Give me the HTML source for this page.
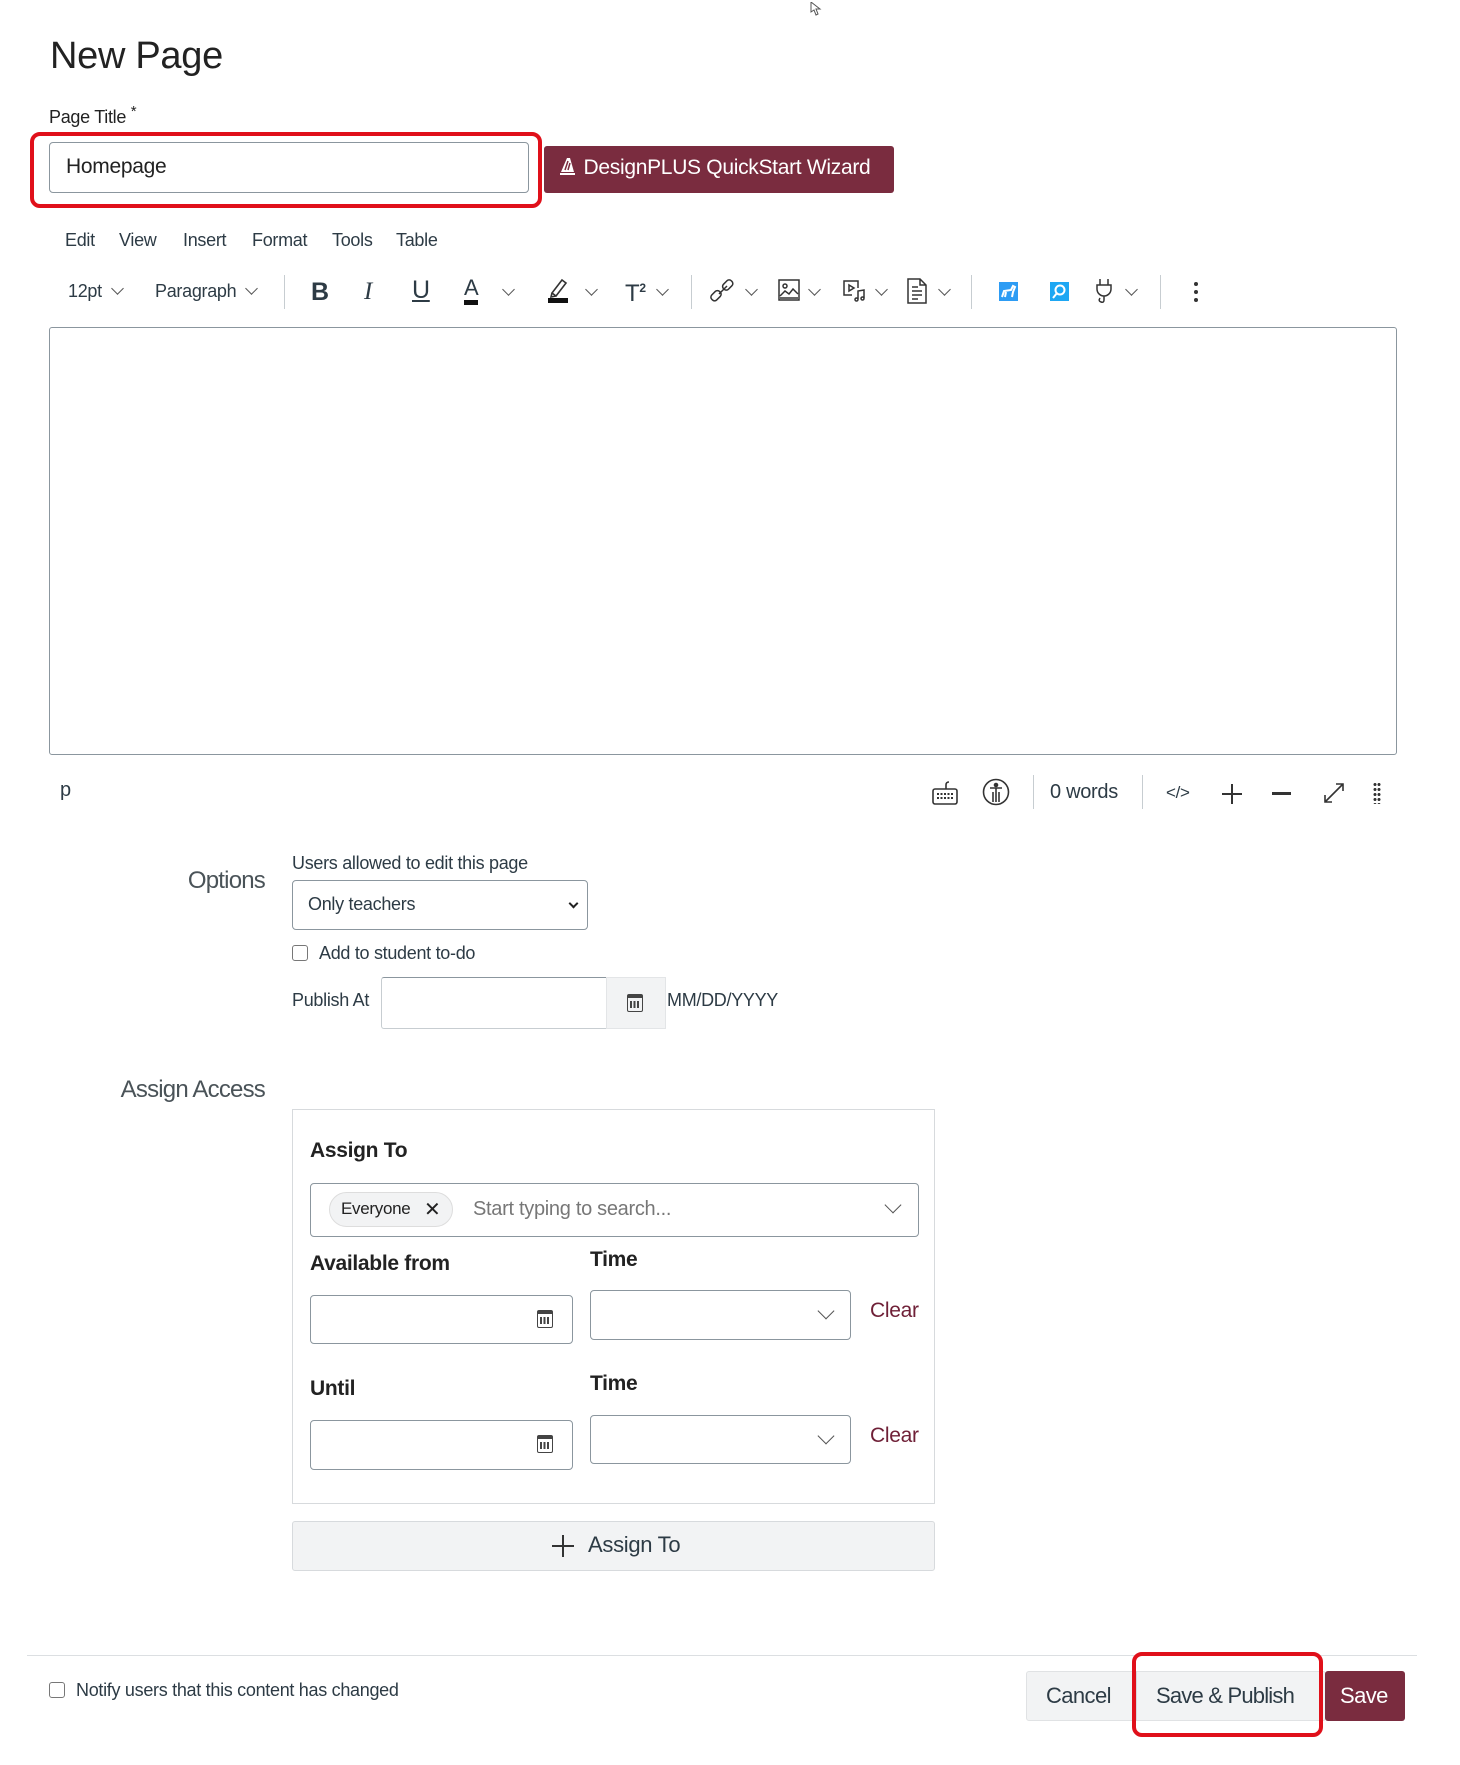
<!DOCTYPE html>
<html><head><meta charset="utf-8"><style>
*{box-sizing:border-box;margin:0;padding:0}
body{width:1460px;height:1763px;background:#fff;font-family:"Liberation Sans",sans-serif;color:#2d3b45;position:relative;overflow:hidden}
#w{position:absolute;left:0;top:2px;width:1460px;height:1763px;letter-spacing:-0.3px}
.a{position:absolute;white-space:nowrap}
.t{font-size:18px;color:#2d3b45}
.ch{display:inline-block;width:9px;height:9px;border-right:1.5px solid #555;border-bottom:1.5px solid #555;transform:rotate(45deg)}
.sep{position:absolute;width:1px;height:34px;background:#c7cdd1;top:273px}
.box{position:absolute;border:1px solid #8b969e;border-radius:4px;background:#fff}
.cal{position:absolute;width:16px;height:18px;border:1.5px solid #444;border-top-width:4px;border-radius:2px}
.cal:after{content:"";position:absolute;left:2px;top:3px;width:9px;height:7px;background:repeating-linear-gradient(90deg,#444 0 2px,transparent 2px 3.5px)}
</style></head><body><div id="w">
<div class="a" style="left:50px;top:33px;font-size:38px;color:#222">New Page</div>
<div class="a t" style="left:49px;top:101px;font-size:18px;color:#222">Page Title <sup>*</sup></div>
<div class="a" style="left:30px;top:130px;width:512px;height:76px;border:4px solid #e0101a;border-radius:10px"></div>
<div class="box" style="left:49px;top:140px;width:480px;height:51px"></div>
<div class="a" style="left:66px;top:153px;font-size:21px;color:#222">Homepage</div>
<div class="a" style="left:544px;top:144px;width:350px;height:47px;background:#7a2c3f;border-radius:3px;color:#fff;font-size:21px;padding:10px 0 0 14px">
<svg width="20" height="20" viewBox="0 0 20 20" style="vertical-align:-2px"><path d="M9 2 L3 16 H16 L12 2Z" fill="#fff"/><rect x="2" y="17" width="15" height="2" fill="#fff"/><path d="M10 5 L7 14 M12 7 L10 14" stroke="#7a2c3f" stroke-width="1.5"/></svg> DesignPLUS QuickStart Wizard</div>

<div class="a t" style="left:65px;top:228px">Edit</div>
<div class="a t" style="left:119px;top:228px">View</div>
<div class="a t" style="left:183px;top:228px">Insert</div>
<div class="a t" style="left:252px;top:228px">Format</div>
<div class="a t" style="left:332px;top:228px">Tools</div>
<div class="a t" style="left:396px;top:228px">Table</div>

<div class="a t" style="left:68px;top:279px">12pt <span class="ch" style="margin-left:6px;vertical-align:4px"></span></div>
<div class="a t" style="left:155px;top:279px">Paragraph <span class="ch" style="margin-left:6px;vertical-align:4px"></span></div>
<div class="sep" style="left:284px"></div>
<div class="a" style="left:311px;top:276px;font-size:25px;font-weight:bold;color:#2d3b45">B</div>
<div class="a" style="left:364px;top:276px;font-size:25px;font-style:italic;font-family:'Liberation Serif',serif">I</div>
<div class="a" style="left:412px;top:274px;font-size:25px;text-decoration:underline">U</div>
<div class="a" style="left:464px;top:274px;font-size:22px;border-bottom:5px solid #111;line-height:24px">A</div>
<span class="a ch" style="left:504px;top:283px"></span>
<svg class="a" style="left:546px;top:273px" width="24" height="28" viewBox="0 0 24 28"><path d="M6 18 L16 5 L20 8 L10 21 Z M6 18 L5 22 L10 21" fill="none" stroke="#333" stroke-width="1.6"/><rect x="2" y="23" width="20" height="5" fill="#111"/></svg>
<span class="a ch" style="left:587px;top:283px"></span>
<div class="a" style="left:625px;top:278px;font-size:24px">T<sup style="font-size:12px;font-weight:bold">2</sup></div>
<span class="a ch" style="left:658px;top:283px"></span>
<div class="sep" style="left:691px"></div>
<svg class="a" style="left:710px;top:275px" width="26" height="26" viewBox="0 0 26 26" fill="none" stroke="#333" stroke-width="1.5"><rect x="3" y="13" width="7" height="11" rx="3" transform="rotate(45 6 18)"/><rect x="14" y="2" width="7" height="11" rx="3" transform="rotate(45 17 8)"/><path d="M9 17 L17 9"/></svg>
<span class="a ch" style="left:747px;top:283px"></span>
<svg class="a" style="left:778px;top:277px" width="22" height="22" viewBox="0 0 22 22" fill="none" stroke="#333" stroke-width="1.5"><rect x="1" y="1" width="20" height="20"/><circle cx="7" cy="7" r="2"/><path d="M2 17 L7 12 L11 15 L15 10 L20 15 M2 19 H20"/></svg>
<span class="a ch" style="left:810px;top:283px"></span>
<svg class="a" style="left:842px;top:277px" width="24" height="24" viewBox="0 0 24 24" fill="none" stroke="#333" stroke-width="1.5"><path d="M16 9 V2 H2 V16 H10"/><path d="M7 6 L12 9 L7 12Z"/><path d="M16 20 V12 L22 11 V19"/><circle cx="14.5" cy="20.5" r="1.5"/><circle cx="20.5" cy="19.5" r="1.5"/></svg>
<span class="a ch" style="left:877px;top:283px"></span>
<svg class="a" style="left:907px;top:276px" width="20" height="26" viewBox="0 0 20 26" fill="none" stroke="#333" stroke-width="1.5"><path d="M1 1 H13 L19 7 V25 H1Z M13 1 V7 H19 M5 9 H11 M5 13 H15 M5 17 H15 M5 21 H11"/></svg>
<span class="a ch" style="left:940px;top:283px"></span>
<div class="sep" style="left:971px"></div>
<div class="a" style="left:999px;top:280px;width:19px;height:19px;background:#2d9cf4"><svg width="19" height="19" viewBox="0 0 19 19"><path d="M3 15 L5 9 L12 8 L14 4 L16 5 L14 10 L13 15 M7 10 L6 15" stroke="#fff" stroke-width="2" fill="none"/></svg></div>
<div class="a" style="left:1050px;top:280px;width:19px;height:19px;background:#1ea7f3"><svg width="19" height="19" viewBox="0 0 19 19"><circle cx="10" cy="8" r="4.5" stroke="#fff" stroke-width="2" fill="none"/><path d="M7 11 L3 16" stroke="#fff" stroke-width="2"/></svg></div>
<svg class="a" style="left:1094px;top:276px" width="20" height="26" viewBox="0 0 20 26" fill="none" stroke="#333" stroke-width="1.5"><path d="M6 1 V7 M14 1 V7 M3 7 H17 V11 A7 7 0 0 1 3 11Z M10 18 V22 Q10 25 7 24 Q4 23 6 20"/></svg>
<span class="a ch" style="left:1127px;top:283px"></span>
<div class="sep" style="left:1160px"></div>
<div class="a" style="left:1194px;top:280px;width:4px;line-height:0"><div style="width:4px;height:4px;border-radius:2px;background:#333;margin-bottom:4px"></div><div style="width:4px;height:4px;border-radius:2px;background:#333;margin-bottom:4px"></div><div style="width:4px;height:4px;border-radius:2px;background:#333"></div></div>

<div class="a" style="left:49px;top:325px;width:1348px;height:428px;border:1px solid #8b969e;border-radius:3px"></div>

<div class="a t" style="left:60px;top:777px;font-size:20px">p</div>
<svg class="a" style="left:932px;top:777px" width="26" height="26" viewBox="0 0 26 26" fill="none" stroke="#333" stroke-width="1.6"><rect x="1" y="10" width="24" height="15" rx="2"/><path d="M14 10 V6 Q14 3 17 3"/><path d="M5 15 H21 M5 19 H21" stroke-dasharray="2 1.5" stroke-width="2"/></svg>
<svg class="a" style="left:982px;top:776px" width="28" height="28" viewBox="0 0 28 28" fill="none" stroke="#333" stroke-width="1.6"><circle cx="14" cy="14" r="12.5"/><circle cx="14" cy="7" r="1.5" fill="#333"/><path d="M8 10 H20 M14 10 V24 M11 14 V24 M17 14 V24"/></svg>
<div class="a" style="left:1033px;top:773px;width:1px;height:34px;background:#c7cdd1"></div>
<div class="a t" style="left:1050px;top:779px;font-size:20px">0 words</div>
<div class="a" style="left:1142px;top:773px;width:1px;height:34px;background:#c7cdd1"></div>
<div class="a t" style="left:1166px;top:781px;font-size:17px">&lt;/&gt;</div>
<div class="a" style="left:1222px;top:791px;width:20px;height:2px;background:#333"></div>
<div class="a" style="left:1231px;top:782px;width:2px;height:20px;background:#333"></div>
<div class="a" style="left:1272px;top:790px;width:19px;height:3px;background:#333"></div>
<svg class="a" style="left:1322px;top:779px" width="24" height="24" viewBox="0 0 24 24" fill="none" stroke="#333" stroke-width="1.6"><path d="M3 21 L21 3 M14 3 H21 V10 M3 14 V21 H10"/></svg>
<div class="a" style="left:1373px;top:780px;width:8px;height:22px;background:radial-gradient(circle,#333 1.4px,transparent 1.6px) 0 0/4px 5px"></div>

<div class="a" style="right:1195px;top:865px;font-size:24px;color:#4a5358;letter-spacing:-0.8px">Options</div>
<div class="a t" style="left:292px;top:851px">Users allowed to edit this page</div>
<div class="box" style="left:292px;top:878px;width:296px;height:50px"></div>
<div class="a t" style="left:308px;top:892px">Only teachers</div>
<span class="a ch" style="left:570px;top:898px;width:7px;height:7px;border-color:#222;border-width:2px"></span>
<div class="a" style="left:292px;top:943px;width:16px;height:16px;border:1.5px solid #777;border-radius:3px"></div>
<div class="a t" style="left:319px;top:941px">Add to student to-do</div>
<div class="a t" style="left:292px;top:988px">Publish At</div>
<div class="a" style="left:381px;top:975px;width:226px;height:52px;border:1px solid #c7cdd1;border-top-color:#8b969e;border-radius:3px 0 0 3px"></div>
<div class="a" style="left:606px;top:975px;width:60px;height:52px;background:#f2f3f4;border:1px solid #e3e5e7"></div>
<div class="cal" style="left:627px;top:992px"></div>
<div class="a t" style="left:667px;top:988px">MM/DD/YYYY</div>

<div class="a" style="right:1195px;top:1074px;font-size:24px;color:#4a5358;letter-spacing:-0.8px">Assign Access</div>
<div class="a" style="left:292px;top:1107px;width:643px;height:395px;border:1px solid #d7dadd"></div>
<div class="a" style="left:310px;top:1137px;font-size:21px;font-weight:bold;color:#222">Assign To</div>
<div class="box" style="left:310px;top:1181px;width:609px;height:54px"></div>
<div class="a" style="left:329px;top:1190px;width:124px;height:35px;background:#f2f3f4;border:1px solid #ddd;border-radius:18px"></div>
<div class="a" style="left:341px;top:1197px;font-size:17px;color:#222">Everyone</div>
<div class="a" style="left:424px;top:1195px;font-size:20px;color:#222">✕</div>
<div class="a" style="left:473px;top:1196px;font-size:20px;color:#777">Start typing to search...</div>
<span class="a ch" style="left:887px;top:1197px;width:12px;height:12px"></span>
<div class="a" style="left:310px;top:1250px;font-size:21px;font-weight:bold;color:#222">Available from</div>
<div class="a" style="left:590px;top:1246px;font-size:21px;font-weight:bold;color:#222">Time</div>
<div class="box" style="left:310px;top:1293px;width:263px;height:49px"></div>
<div class="cal" style="left:537px;top:1308px"></div>
<div class="box" style="left:590px;top:1288px;width:261px;height:50px"></div>
<span class="a ch" style="left:820px;top:1303px;width:12px;height:12px"></span>
<div class="a" style="left:870px;top:1297px;font-size:21px;color:#6f2037">Clear</div>
<div class="a" style="left:310px;top:1375px;font-size:21px;font-weight:bold;color:#222">Until</div>
<div class="a" style="left:590px;top:1370px;font-size:21px;font-weight:bold;color:#222">Time</div>
<div class="box" style="left:310px;top:1418px;width:263px;height:50px"></div>
<div class="cal" style="left:537px;top:1433px"></div>
<div class="box" style="left:590px;top:1413px;width:261px;height:49px"></div>
<span class="a ch" style="left:820px;top:1428px;width:12px;height:12px"></span>
<div class="a" style="left:870px;top:1422px;font-size:21px;color:#6f2037">Clear</div>
<div class="a" style="left:292px;top:1519px;width:643px;height:50px;background:#f2f3f4;border:1px solid #d7dadd;border-radius:3px"></div>
<div class="a" style="left:552px;top:1543px;width:22px;height:1.5px;background:#333"></div>
<div class="a" style="left:562px;top:1533px;width:1.5px;height:22px;background:#333"></div>
<div class="a" style="left:588px;top:1530px;font-size:22px;color:#2d3b45">Assign To</div>

<div class="a" style="left:27px;top:1653px;width:1390px;height:1px;background:#dcdfe2"></div>
<div class="a" style="left:49px;top:1680px;width:16px;height:16px;border:1.5px solid #777;border-radius:3px"></div>
<div class="a t" style="left:76px;top:1678px">Notify users that this content has changed</div>
<div class="a" style="left:1026px;top:1669px;width:300px;height:50px;background:#f2f3f4;border:1px solid #e0e2e4;border-radius:3px"></div>
<div class="a" style="left:1136px;top:1669px;width:1px;height:50px;background:#d7dadd"></div>
<div class="a" style="left:1046px;top:1681px;font-size:22px;color:#2d3b45;letter-spacing:-0.6px">Cancel</div>
<div class="a" style="left:1156px;top:1681px;font-size:22px;color:#2d3b45;letter-spacing:-0.8px">Save &amp; Publish</div>
<div class="a" style="left:1325px;top:1669px;width:80px;height:50px;background:#7a2c3f;border-radius:3px"></div>
<div class="a" style="left:1340px;top:1681px;font-size:22px;color:#fff;letter-spacing:-0.6px">Save</div>
<div class="a" style="left:1132px;top:1650px;width:191px;height:85px;border:4px solid #e0101a;border-radius:10px"></div>
<svg class="a" style="left:807px;top:0" width="20" height="16" viewBox="0 0 20 16"><path d="M4 0 L4 10 L7 8 L9 13 L11 12 L9 7 L13 7Z" fill="#fff" stroke="#555" stroke-width="1"/></svg>
</div></body></html>
